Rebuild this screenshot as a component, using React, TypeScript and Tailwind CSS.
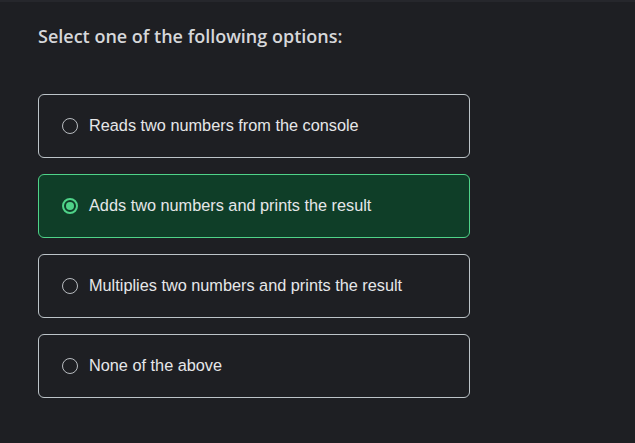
import { useState } from "react";

const OPTIONS = [
  "Reads two numbers from the console",
  "Adds two numbers and prints the result",
  "Multiplies two numbers and prints the result",
  "None of the above",
];

export default function App() {
  const [selected, setSelected] = useState(1);

  return (
    <div className="min-h-screen w-full bg-[#1e1f23] border-t-2 border-[#26272c]">
      <div className="pl-[38px] pt-[20px] w-[470px]">
        <h2 className="text-[18px] leading-[28px] font-semibold text-[#d6d7da] font-['Open_Sans',sans-serif]">
          Select one of the following options:
        </h2>

        <div className="mt-[44px] flex flex-col gap-4">
          {OPTIONS.map((opt, i) => {
            const active = i === selected;
            return (
              <button
                key={opt}
                onClick={() => setSelected(i)}
                className={`h-16 w-[432px] rounded-md border flex items-center gap-[11px] pl-[23px] pb-px text-left ${
                  active ? "bg-[#0f3e28] border-[#4fd389]" : "bg-[#1e1f23] border-[#bcc4c8]"
                }`}
              >
                {active ? (
                  <span className="w-4 h-4 rounded-full border-2 border-[#4fd389] flex items-center justify-center">
                    <span className="w-2 h-2 rounded-full bg-[#4fd389]" />
                  </span>
                ) : (
                  <span className="w-4 h-4 rounded-full border-[1.5px] border-[#b8bcc0]" />
                )}
                <span className="text-[16.3px] text-[#e6e7e9] font-['Liberation_Sans',Arial,sans-serif]">
                  {opt}
                </span>
              </button>
            );
          })}
        </div>
      </div>
    </div>
  );
}
